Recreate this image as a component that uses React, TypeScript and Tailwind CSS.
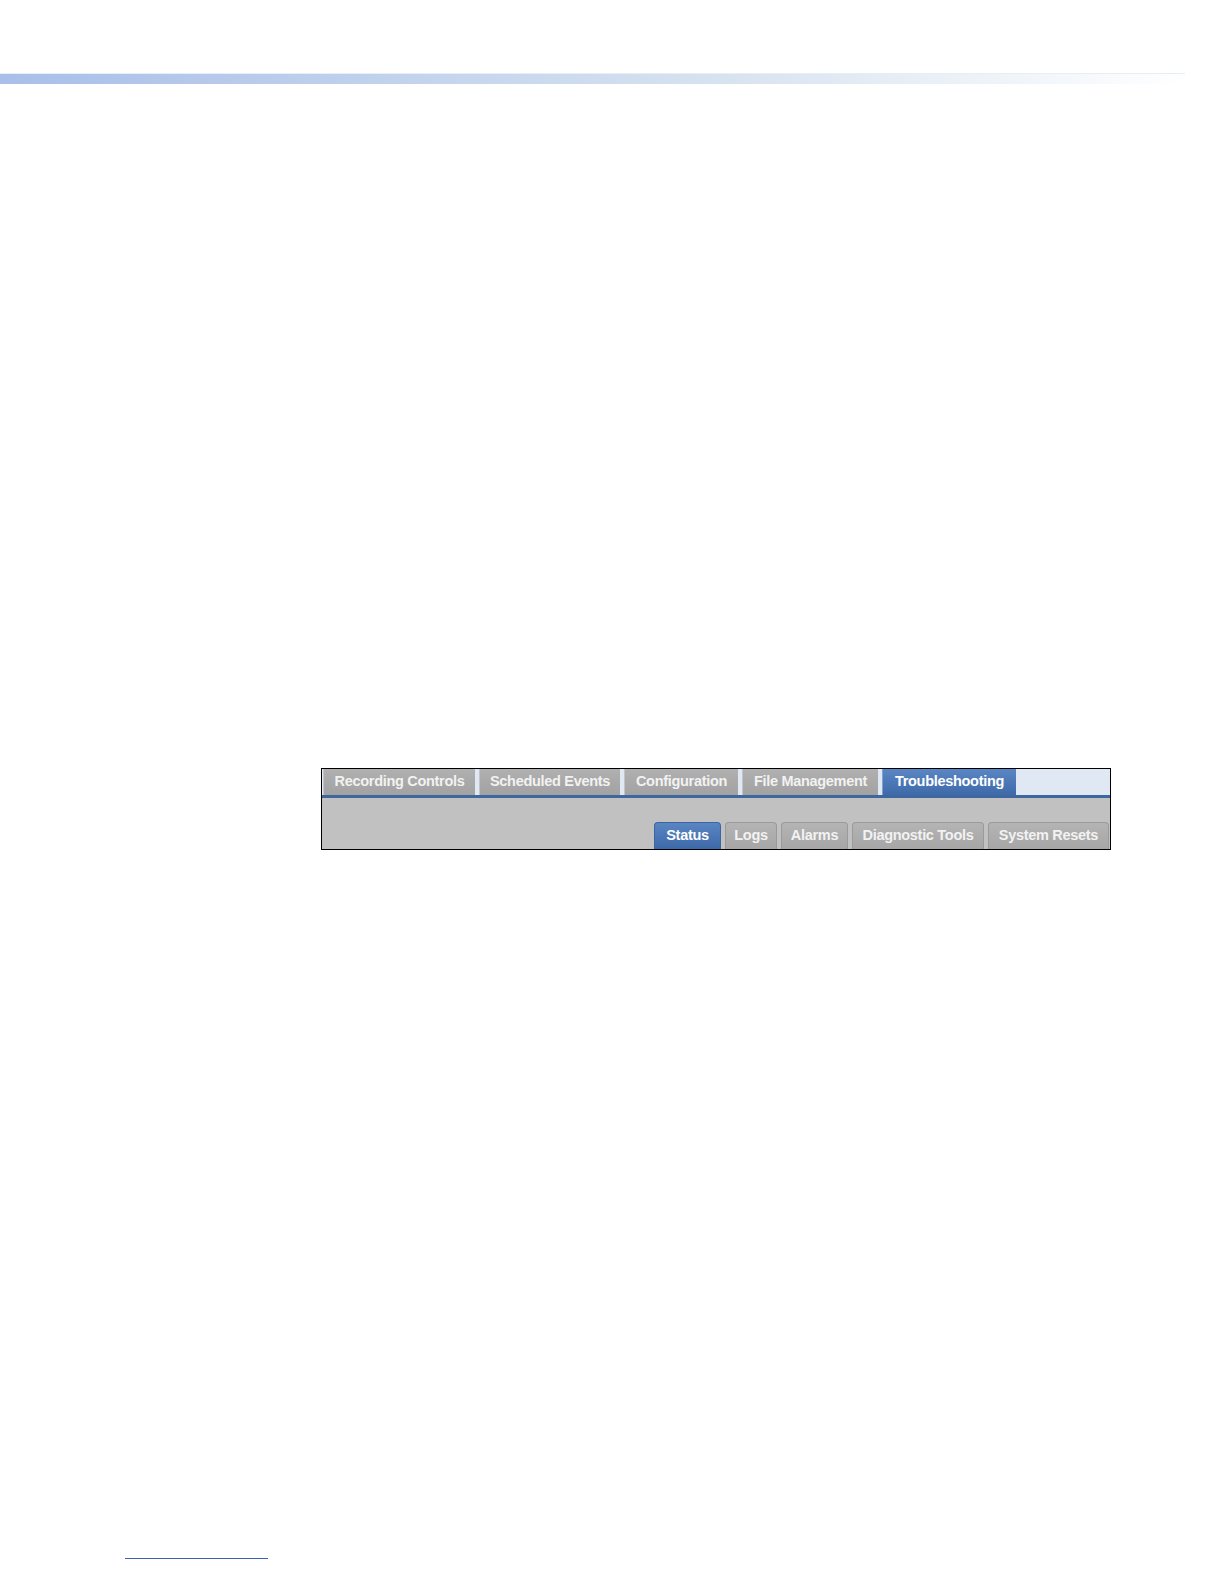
const topTabs = [
  { label: "Recording Controls", w: 152 },
  { label: "Scheduled Events", w: 141 },
  { label: "Configuration", w: 114 },
  { label: "File Management", w: 136 },
  { label: "Troubleshooting", w: 134, active: true },
];

const subTabs = [
  { label: "Status", w: 67, active: true },
  { label: "Logs", w: 52 },
  { label: "Alarms", w: 67 },
  { label: "Diagnostic Tools", w: 132 },
  { label: "System Resets", w: 121 },
];

const font = { fontFamily: '"Liberation Sans", Arial, sans-serif' };

export default function App() {
  return (
    <div className="relative h-[1584px] w-[1224px] bg-white" style={font}>
      {/* header rule */}
      <div className="pt-[73px]">
        <div className="h-[11px] w-[1185px] bg-gradient-to-r from-[#a9bfe9] via-[#d6e2ef] via-60% to-white border-t border-[#e6eef6]" />
      </div>

      {/* tab widget */}
      <div className="ml-[321px] mt-[684px] w-[790px] border border-black bg-[#c1c1c1]">
        <div className="flex h-[26px] gap-[4px] bg-[#dfe8f3] pl-[1px]">
          {topTabs.map((t) => (
            <div
              key={t.label}
              style={{ width: t.w }}
              className={
                t.active
                  ? "flex items-center justify-center border-l border-[#7fa2d4] bg-gradient-to-b from-[#5a86c4] to-[#3f6aa9] text-[14.5px] font-bold tracking-[-0.3px] text-white"
                  : "flex items-center justify-center border-l border-[#c4c4c4] bg-gradient-to-b from-[#b0b0b0] to-[#a2a2a2] text-[14.5px] font-bold tracking-[-0.3px] text-[#f2f2f2]"
              }
            >
              {t.label}
            </div>
          ))}
        </div>
        <div className="h-[3px] bg-[#3f679f]" />
        <div className="flex h-[51px] items-end justify-end gap-[4px] pr-[1px]">
          {subTabs.map((t) => (
            <div
              key={t.label}
              style={{ width: t.w }}
              className={
                t.active
                  ? "flex h-[27px] items-center justify-center rounded-t-[4px] border border-b-0 border-[#3c64a0] bg-gradient-to-b from-[#5985c3] to-[#3e69a8] text-[14.5px] font-bold tracking-[-0.3px] text-white"
                  : "flex h-[27px] items-center justify-center rounded-t-[4px] border border-b-0 border-[#9a9a9a] bg-gradient-to-b from-[#b4b4b4] to-[#a6a6a6] text-[14.5px] font-bold tracking-[-0.3px] text-[#f2f2f2]"
              }
            >
              {t.label}
            </div>
          ))}
        </div>
      </div>

      {/* footer link rule */}
      <div className="ml-[125px] mt-[708px] h-px w-[143px] bg-[#3d5fb8]" />
    </div>
  );
}
